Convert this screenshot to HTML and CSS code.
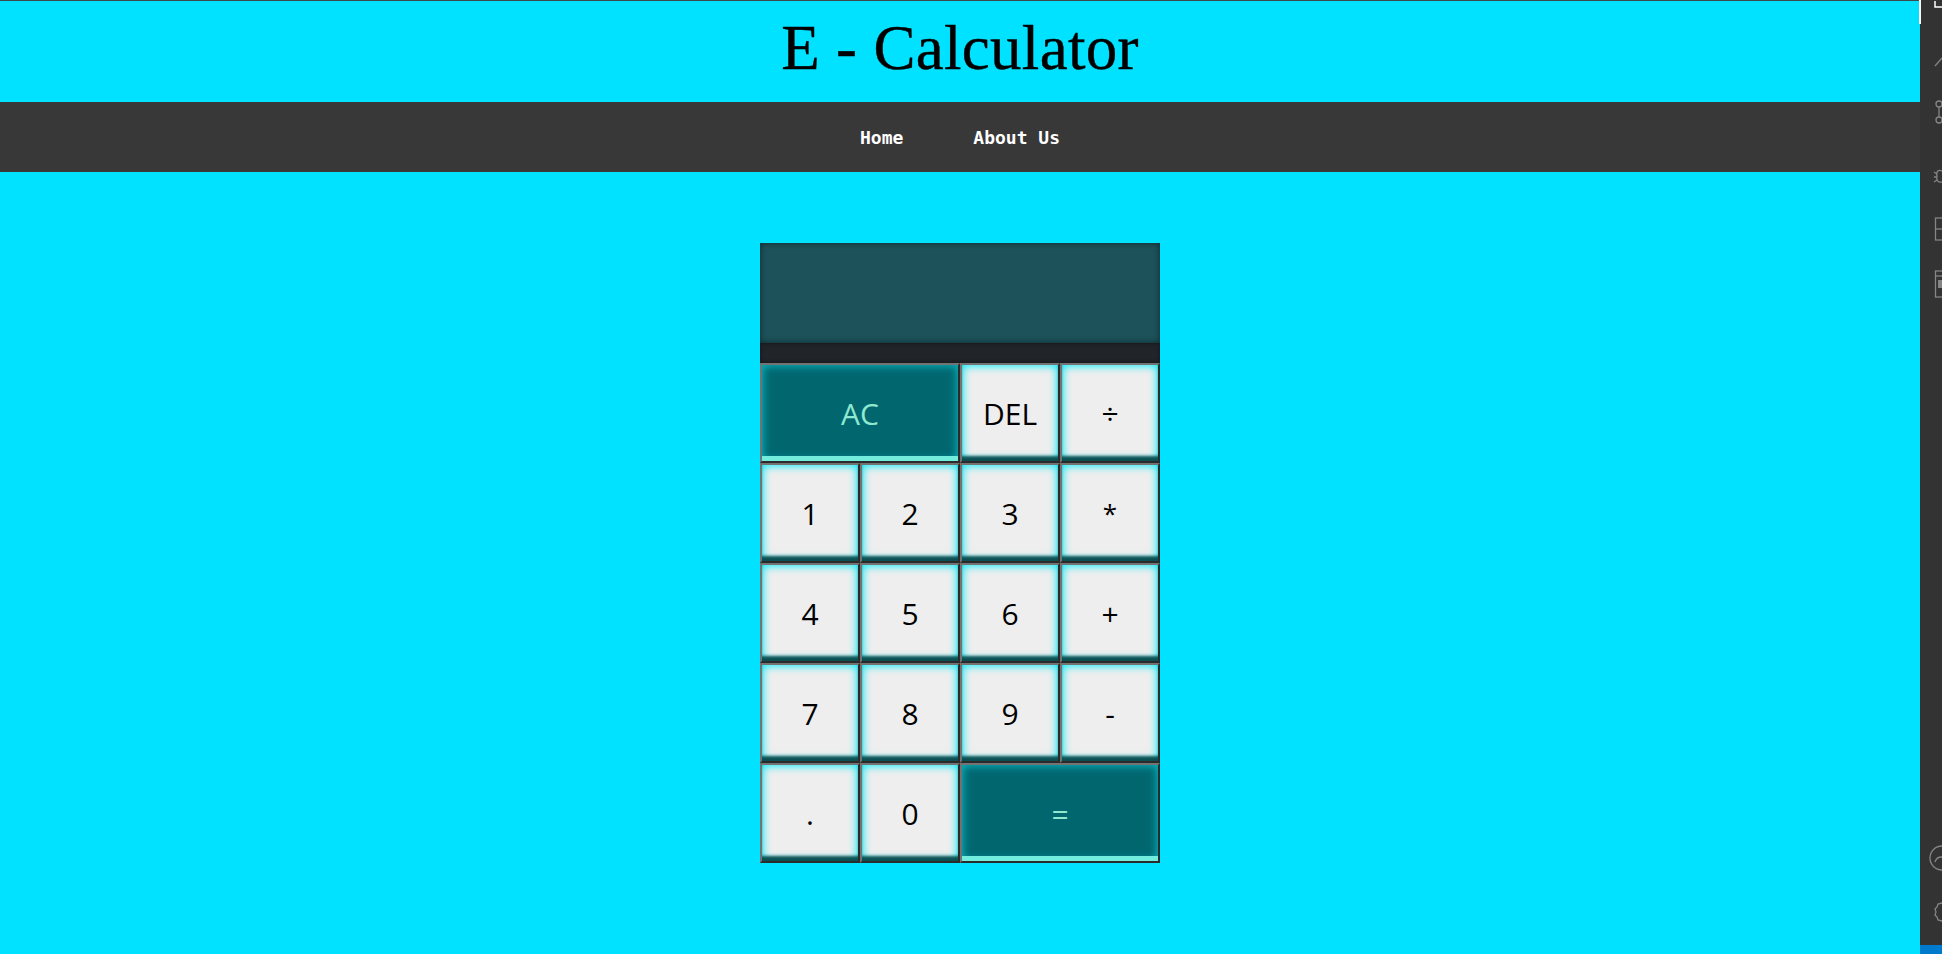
FILE: index.html
```html
<!DOCTYPE html>
<html lang="en">
<head>
<meta charset="utf-8">
<title>E - Calculator</title>
<link rel="stylesheet" href="styles.css">
</head>
<body>
<div class="app">
  <div class="page">
    <header class="masthead">
      <h1 class="title">E - Calculator</h1>
    </header>
    <nav class="navbar">
      <a class="nav-link" href="#">Home</a>
      <a class="nav-link" href="#">About Us</a>
    </nav>
    <main class="main">
      <div class="calc">
        <div class="display"></div>
        <div class="display-bar"></div>
        <div class="keys">
          <button class="key key-accent key-wide">AC</button>
          <button class="key">DEL</button>
          <button class="key">÷</button>
          <button class="key">1</button>
          <button class="key">2</button>
          <button class="key">3</button>
          <button class="key key-small">*</button>
          <button class="key">4</button>
          <button class="key">5</button>
          <button class="key">6</button>
          <button class="key">+</button>
          <button class="key">7</button>
          <button class="key">8</button>
          <button class="key">9</button>
          <button class="key">-</button>
          <button class="key">.</button>
          <button class="key">0</button>
          <button class="key key-accent key-wide">=</button>
        </div>
      </div>
    </main>
  </div>
  <aside class="activity">
    <svg class="activity-icons" width="22" height="954" viewBox="0 0 22 954" fill="none" stroke="#858585" stroke-width="1.3">
      <path d="M15 1 V7 H22" stroke="#ffffff" stroke-width="1.5"/>
      <path d="M15 66 L22 58"/>
      <circle cx="19" cy="104" r="3"/>
      <circle cx="19" cy="120" r="3"/>
      <path d="M19 107 V117"/>
      <path d="M22 171 C18 169 16 172 17 176 C16 180 18 183 22 182 M14 172 L17 174 M14 177 H17 M14 182 L17 180"/>
      <rect x="15.5" y="218" width="12" height="22"/>
      <path d="M15.5 229 H22"/>
      <rect x="15.5" y="271" width="12" height="26"/>
      <path d="M15.5 276 H22"/>
      <rect x="18" y="280" width="4" height="8" fill="#858585" stroke="none"/>
      <path d="M22 846 A11 11 0 0 0 22 870 M15 862 A7 7 0 0 1 22 857"/>
      <path d="M22 903 L18 904 L17 907 L15 909 L16 912 L15 915 L17 917 L18 920 L22 921"/>
    </svg>
    <div class="statusbar"></div>
  </aside>
  <div class="edge-mark"></div>
</div>
</body>
</html>
```

FILE: styles.css
```css
* {
  box-sizing: border-box;
}

html, body {
  margin: 0;
  padding: 0;
}

body {
  font-family: "Liberation Sans", Arial, sans-serif;
  background: #00e2ff;
  overflow: hidden;
}

.app {
  display: flex;
  width: 1942px;
  height: 954px;
  position: relative;
}

.page {
  width: 1920px;
  height: 954px;
  background: #00e2ff;
  display: flex;
  flex-direction: column;
}

.masthead {
  height: 102px;
  border-top: 1px solid #3c4a4e;
  padding-top: 11px;
  text-align: center;
}

.title {
  margin: 0;
  font-family: "Liberation Serif", "Times New Roman", serif;
  font-weight: normal;
  font-size: 63px;
  line-height: normal;
  color: #000;
  letter-spacing: 0.3px;
  -webkit-text-stroke: 0.4px #000;
}

.navbar {
  height: 70px;
  background: #383838;
  display: flex;
  align-items: center;
  justify-content: center;
  gap: 70px;
}

.nav-link {
  font-family: "DejaVu Sans Mono", "Liberation Mono", monospace;
  font-weight: bold;
  font-size: 18px;
  color: #ffffff;
  text-decoration: none;
}

.main {
  display: flex;
  justify-content: center;
  padding-top: 71px;
}

.calc {
  width: 400px;
  display: flex;
  flex-direction: column;
}

.display {
  height: 100px;
  background: #1d525b;
  box-shadow: inset 0 0 6px rgba(0, 0, 0, 0.55);
}

.display-bar {
  height: 20px;
  background: #212428;
  box-shadow: inset 0 0 4px rgba(0, 0, 0, 0.5);
}

.keys {
  display: grid;
  grid-template-columns: repeat(4, 100px);
  grid-auto-rows: 100px;
}

.key {
  margin: 0;
  padding: 0;
  font-family: "Open Sans", "Noto Sans", sans-serif;
  font-size: 30px;
  font-weight: 400;
  color: #000;
  background: #eeeeee;
  border: 2px solid;
  border-color: #737373 #2b2b2b #2b2b2b #737373;
  box-shadow: inset 0 -6px 3px -1px #0b5053, inset 0 0 8px 1px #00ecf8;
  cursor: pointer;
}

.key-small {
  font-size: 26px;
}

.key-wide {
  grid-column: span 2;
}

.key-accent {
  background: #02666f;
  color: #8ee9d0;
  box-shadow: inset 0 -5px 0 #72ecdc, inset 0 0 8px 1px #0cb8c2;
}

.activity {
  width: 22px;
  height: 954px;
  background: #333333;
  position: relative;
  overflow: hidden;
}

.activity-icons {
  display: block;
}

.statusbar {
  position: absolute;
  left: 0;
  bottom: 0;
  width: 22px;
  height: 9px;
  background: #007acc;
}

.edge-mark {
  position: absolute;
  left: 1919px;
  top: 0;
  width: 2px;
  height: 24px;
  background: #ffffff;
}
```
